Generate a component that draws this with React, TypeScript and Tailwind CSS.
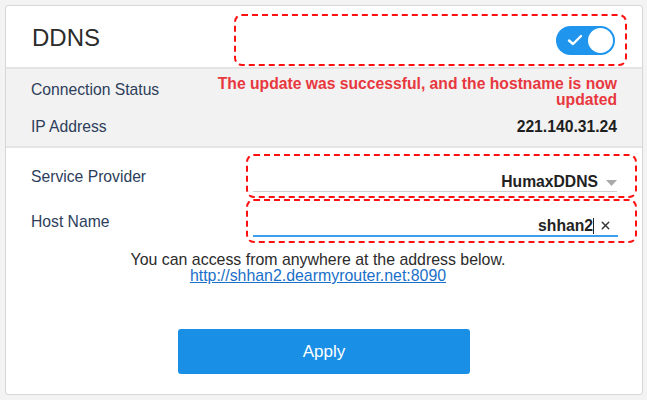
import { X } from 'lucide-react';

const FONT = "font-['Liberation_Sans',Arial,sans-serif]";

function Toggle() {
  return (
    <div className="relative flex h-[29px] w-[59px] items-center rounded-full bg-[#1f95ee]">
      <svg className="ml-[11px]" width="16" height="12" viewBox="0 0 16 12" fill="none">
        <path d="M2 6.5 L6 10 L14 2" stroke="white" strokeWidth="2.4" strokeLinecap="round" strokeLinejoin="round" />
      </svg>
      <div className="absolute right-[2px] top-[2px] size-[25px] rounded-full bg-white" />
    </div>
  );
}

function Row({ label, children }: { label: string; children: React.ReactNode }) {
  return (
    <div className="flex items-center">
      <span className="pl-[25px] text-[15.7px] leading-[17px] text-[#2d3e5b]">{label}</span>
      <div className="ml-auto mr-[5px] flex h-[44px] w-[391px] flex-col rounded-[8px] border-2 border-dashed border-[#ff1010]">
        {children}
      </div>
    </div>
  );
}

export default function App() {
  return (
    <div className={`${FONT} h-[400px] w-[647px] bg-[#f3f3f3] pt-[5px] pl-[5px]`}>
      <div className="flex h-[390px] w-[638px] flex-col rounded-[3px] border border-[#d6d6d6] bg-white">
        <div className="flex h-[61px]">
          <h1 className="pl-[26px] pt-[18px] text-[24px] leading-[27px] text-[#2b2b2b]">DDNS</h1>
          <div className="ml-auto mr-[15px] mt-[8px] flex h-[52px] w-[393px] items-center justify-end rounded-[8px] border-2 border-dashed border-[#ff1010] pr-[10px]">
            <Toggle />
          </div>
        </div>

        <div className="border-y-2 border-[#e4e4e4] bg-[#f2f2f2] px-[25px] pt-[7px] pb-[11px]">
          <div className="flex items-start justify-between">
            <span className="mt-[5px] text-[15.7px] leading-[17px] text-[#2d3e5b]">Connection Status</span>
            <p className="text-right text-[15.7px] font-bold leading-[16px] text-[#e8383f]">
              The update was successful, and the hostname is now
              <br />
              updated
            </p>
          </div>
          <div className="mt-[10px] flex items-center justify-between">
            <span className="text-[15.7px] leading-[17px] text-[#2d3e5b]">IP Address</span>
            <span className="text-[15.7px] font-bold leading-[17px] text-[#1e1e1e]">221.140.31.24</span>
          </div>
        </div>

        <div className="mt-[6px] flex flex-col">
          <Row label="Service Provider">
            <div className="mb-[4px] ml-[5px] mr-[18px] mt-auto flex items-center justify-end border-b border-[#cfcfcf] pb-[1px]">
              <span className="text-[15.7px] font-bold leading-[17px] text-[#222]">HumaxDDNS</span>
              <svg className="ml-[8px] mt-[3px]" width="11" height="7" viewBox="0 0 11 7">
                <path d="M0 0 H11 L5.5 6 Z" fill="#a9a9a9" />
              </svg>
            </div>
          </Row>
          <div className="h-px" />
          <Row label="Host Name">
            <div className="mb-[4px] ml-[5px] mr-[17px] mt-auto flex items-center justify-end border-b-2 border-[#3f9ded] pb-[1px]">
              <span className="text-[15.7px] font-bold leading-[17px] text-[#222]">shhan2</span>
              <span className="h-[16px] w-px bg-[#222]" />
              <X className="ml-[5px] mr-[6px] size-[13px] text-[#333]" strokeWidth={2.5} />
            </div>
          </Row>
        </div>

        <div className="mt-[9px] flex flex-col items-center pr-[12px] text-[15.9px] leading-[16px]">
          <p className="text-[#2b2b2b]">You can access from anywhere at the address below.</p>
          <a href="#" className="text-[#1a6fc8] underline">
            http://shhan2.dearmyrouter.net:8090
          </a>
        </div>

        <button className="mx-auto mt-[45px] h-[45px] w-[292px] rounded-[3px] bg-[#1a8fe6] text-[17px] text-white">
          Apply
        </button>
      </div>
    </div>
  );
}
